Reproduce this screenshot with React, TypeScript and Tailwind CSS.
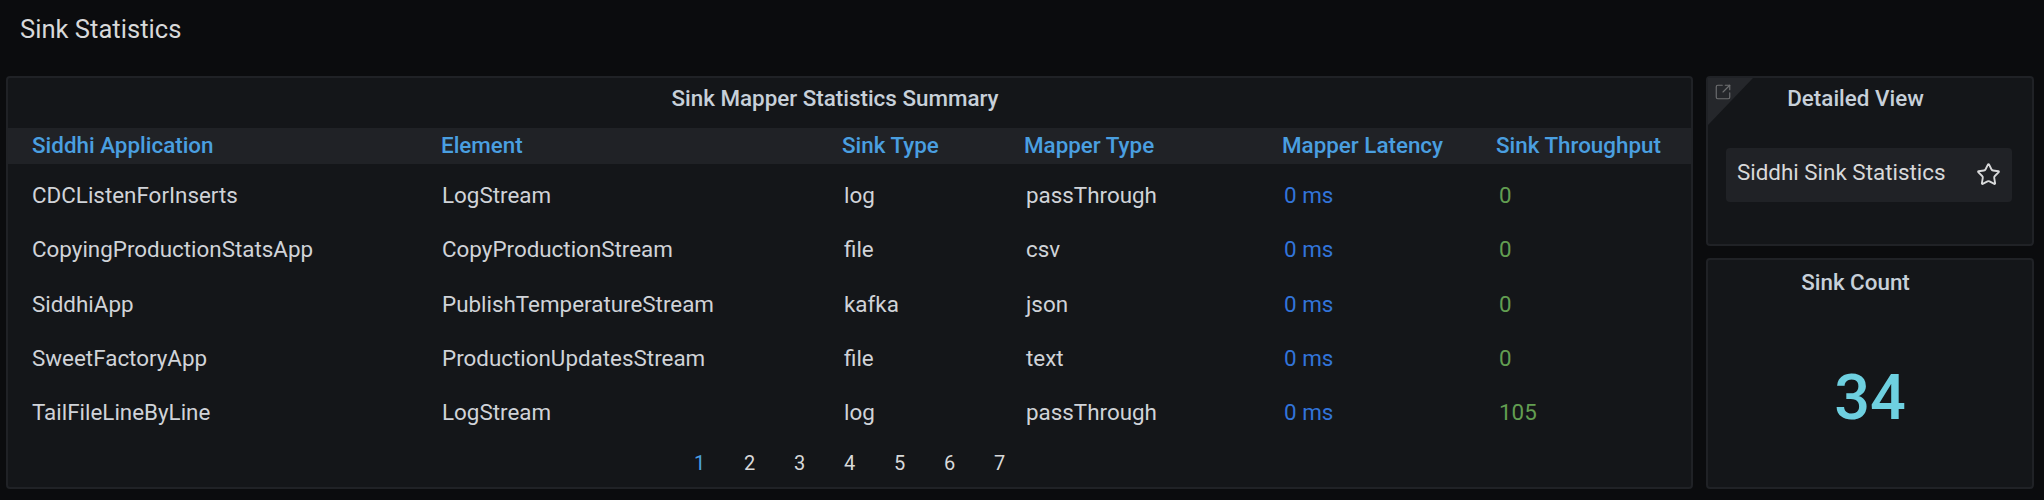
import { Star, SquareArrowOutUpRight } from "lucide-react";

const rows = [
  ["CDCListenForInserts", "LogStream", "log", "passThrough", "0 ms", "0"],
  ["CopyingProductionStatsApp", "CopyProductionStream", "file", "csv", "0 ms", "0"],
  ["SiddhiApp", "PublishTemperatureStream", "kafka", "json", "0 ms", "0"],
  ["SweetFactoryApp", "ProductionUpdatesStream", "file", "text", "0 ms", "0"],
  ["TailFileLineByLine", "LogStream", "log", "passThrough", "0 ms", "105"],
];

const headers = ["Siddhi Application", "Element", "Sink Type", "Mapper Type", "Mapper Latency", "Sink Throughput"];
const headCols = "grid grid-cols-[409px_401px_182px_258px_214px_1fr]";
const rowCols = "grid grid-cols-[410px_402px_182px_258px_215px_1fr]";

function PanelTitle({ children, className = "h-[41px]" }: { children: string; className?: string }) {
  return (
    <div className={`${className} pr-[29px] flex items-center justify-center text-[22.4px] font-medium text-[#c7d0d9]`}>
      {children}
    </div>
  );
}

export default function App() {
  return (
    <div className="h-[500px] bg-[#0b0c0e] font-['Roboto',sans-serif] flex flex-col overflow-hidden">
      <div className="h-[76px] pl-[20px] pt-[14px] text-[25.6px] leading-[30px] text-[#d8d9da]">Sink Statistics</div>

      <div className="flex gap-[13px] pl-[6px] pr-[10px] h-[413px]">
        <div className="flex-1 bg-[#141619] border-2 border-[#202226] rounded-[4px] flex flex-col">
          <PanelTitle>Sink Mapper Statistics Summary</PanelTitle>
          <div className={`${headCols} h-[36px] mt-[9px] items-center bg-[#202226] pl-[24px] text-[22.4px] font-medium text-[#4a9fe0]`}>
            {headers.map((h) => (
              <div key={h}>{h}</div>
            ))}
          </div>
          <div className="pl-[24px] mt-[5px] text-[22.4px] text-[#d0d3d8]">
            {rows.map((r, i) => (
              <div key={i} className={`${rowCols} h-[54.2px] items-center`}>
                <div>{r[0]}</div>
                <div>{r[1]}</div>
                <div>{r[2]}</div>
                <div>{r[3]}</div>
                <div className="text-[#3274d9]">{r[4]}</div>
                <div className="text-[#629e51]">{r[5]}</div>
              </div>
            ))}
          </div>
          <div className="flex justify-center pl-[1px] gap-[38px] mt-[8px] text-[20px] text-[#d8d9da]">
            {[1, 2, 3, 4, 5, 6, 7].map((n) => (
              <span key={n} className={n === 1 ? "text-[#4a9fe0] w-[12px]" : "w-[12px]"}>
                {n}
              </span>
            ))}
          </div>
        </div>

        <div className="w-[328px] flex flex-col gap-[12px]">
          <div className="relative h-[170px] bg-[#141619] border-2 border-[#202226] rounded-[4px]">
            <svg className="absolute left-0 top-0" width="45" height="47" viewBox="0 0 45 47">
              <polygon points="0,0 45,0 0,47" fill="#25272b" />
            </svg>
            <SquareArrowOutUpRight className="absolute left-[6px] top-[5px] w-[18px] h-[18px] text-[#6f7072]" strokeWidth={1.5} />
            <PanelTitle>Detailed View</PanelTitle>
            <div className="ml-[18px] mr-[20px] mt-[29px] h-[54px] bg-[#202226] rounded-[4px] pl-[11px] pr-[11px] flex items-center justify-between text-[22.4px] text-[#d8d9da]">
              <span className="-mt-[4px]">Siddhi Sink Statistics</span>
              <Star className="w-[25px] h-[25px] -mt-[2px] text-[#d8d9da]" strokeWidth={1.8} />
            </div>
          </div>

          <div className="flex-1 bg-[#141619] border-2 border-[#202226] rounded-[4px]">
            <PanelTitle className="h-[45px]">Sink Count</PanelTitle>
            <div className="flex justify-center mt-[61px] text-[63px] leading-[64px] font-medium text-[#6ed0e0]">34</div>
          </div>
        </div>
      </div>
    </div>
  );
}
